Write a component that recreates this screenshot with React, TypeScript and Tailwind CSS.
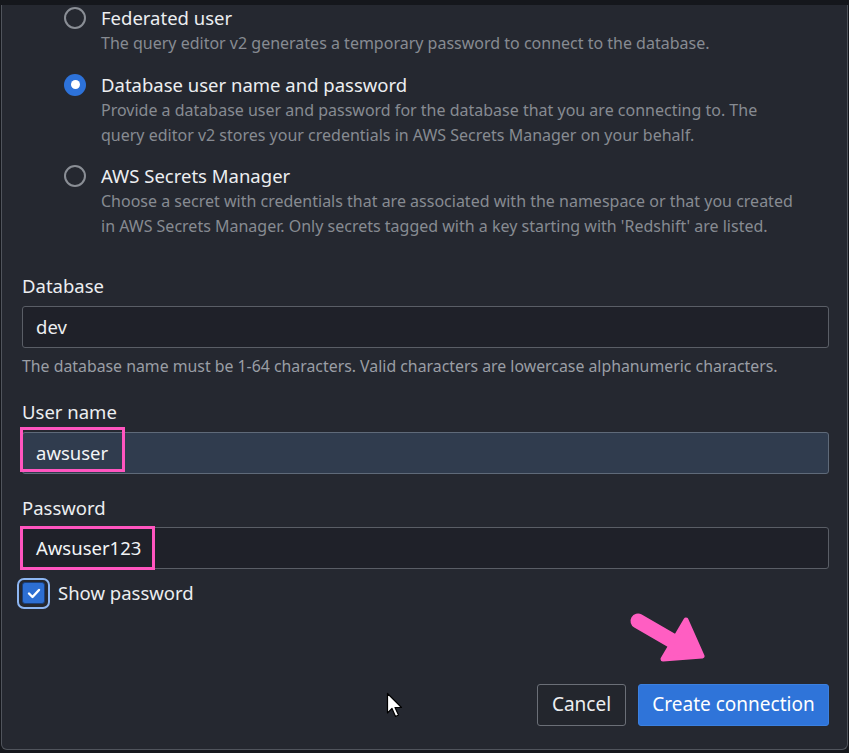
import React from "react";

const font = { fontFamily: '"Noto Sans", "Open Sans", Arial, sans-serif' };

function Radio({ checked }: { checked?: boolean }) {
  if (checked)
    return (
      <div className="w-[22px] h-[22px] rounded-full bg-[#2d72d9] flex items-center justify-center shrink-0">
        <div className="w-[9px] h-[9px] rounded-full bg-white" />
      </div>
    );
  return <div className="w-[22px] h-[22px] rounded-full border-2 border-[#8a8e95] shrink-0" />;
}

function RadioItem({
  checked,
  title,
  lines,
  mt,
}: {
  checked?: boolean;
  title: string;
  lines: string[];
  mt: string;
}) {
  return (
    <div className={`flex ${mt}`}>
      <div className="w-[64px] flex justify-end pt-[2px] shrink-0">
        <Radio checked={checked} />
      </div>
      <div className="ml-[15px]">
        <div className="text-[18.5px] leading-[26px] text-[#eceef0]">{title}</div>
        {lines.map((l, i) => (
          <div key={i} className="text-[16px] leading-[25.5px] text-[#878b92]">
            {l}
          </div>
        ))}
      </div>
    </div>
  );
}

export default function App() {
  return (
    <div className="w-[849px] h-[753px] bg-[#15171c] overflow-hidden relative" style={font}>
      <div className="ml-[1px] w-[847px] h-[745px] bg-[#252830] border-l border-r border-b border-[#50545c] rounded-b-[6px] relative">
        <div className="pl-[20px] pr-[18px]">
          <RadioItem
            mt="mt-[5px]"
            title="Federated user"
            lines={["The query editor v2 generates a temporary password to connect to the database."]}
          />
          <RadioItem
            mt="mt-[15px]"
            checked
            title="Database user name and password"
            lines={[
              "Provide a database user and password for the database that you are connecting to. The",
              "query editor v2 stores your credentials in AWS Secrets Manager on your behalf.",
            ]}
          />
          <RadioItem
            mt="mt-[14px]"
            title="AWS Secrets Manager"
            lines={[
              "Choose a secret with credentials that are associated with the namespace or that you created",
              "in AWS Secrets Manager. Only secrets tagged with a key starting with 'Redshift' are listed.",
            ]}
          />

          <div className="mt-[35px] text-[18.5px] leading-[22px] text-[#eceef0]">Database</div>
          <div className="mt-[9px] h-[42px] bg-[#1f2129] border border-[#5a5e66] rounded-[3px] flex items-center pl-[13px] text-[18.5px] text-[#eceef0]">
            dev
          </div>
          <div className="mt-[7px] text-[15.85px] leading-[22px] text-[#9a9ea5]">
            The database name must be 1-64 characters. Valid characters are lowercase alphanumeric characters.
          </div>

          <div className="mt-[24px] text-[18.5px] leading-[22px] text-[#eceef0]">User name</div>
          <div className="mt-[9px] h-[42px] bg-[#303c4e] border border-[#5f6a79] rounded-[3px] flex items-center pl-[13px] text-[18.5px] text-[#f2f4f6] relative">
            awsuser
            <div className="absolute left-[-3px] top-[-6px] w-[105px] h-[45px] border-[3px] border-[#ff55bf]" />
          </div>

          <div className="mt-[23px] text-[18.5px] leading-[22px] text-[#eceef0]">Password</div>
          <div className="mt-[8px] h-[42px] bg-[#1f2129] border border-[#5a5e66] rounded-[3px] flex items-center pl-[13px] text-[18.5px] text-[#f2f4f6] relative">
            Awsuser123
            <div className="absolute left-[-3px] top-[-2px] w-[135px] h-[44px] border-[3px] border-[#ff55bf]" />
          </div>

          <div className="mt-[9px] flex items-center ml-[-5px]">
            <div className="w-[33px] h-[31px] rounded-[7px] border-2 border-[#8db6f2] flex items-center justify-center">
              <div className="w-[23px] h-[22px] rounded-[3px] bg-[#2d6fd3] border border-[#1b3f7a] flex items-center justify-center">
                <svg width="14" height="11" viewBox="0 0 14 11">
                  <path d="M2 5.5 L5.5 9 L12 2" stroke="white" strokeWidth="2.4" fill="none" strokeLinecap="round" strokeLinejoin="round" />
                </svg>
              </div>
            </div>
            <span className="ml-[8px] text-[18.5px] text-[#eceef0]">Show password</span>
          </div>

          <div className="mt-[75px] flex justify-end gap-[12px]">
            <button className="h-[42px] w-[89px] border border-[#6b6f77] rounded-[3px] text-[19px] text-[#eceef0] bg-[#23262d]">
              Cancel
            </button>
            <button className="h-[42px] w-[191px] rounded-[3px] text-[19px] text-white bg-[#2f74d9] border border-[#3b80e0]">
              Create connection
            </button>
          </div>
        </div>
      </div>

      {/* pink annotation arrow */}
      <svg className="absolute left-0 top-0 pointer-events-none" width="849" height="753">
        <line x1="638" y1="621" x2="676" y2="643" stroke="#ff5ec2" strokeWidth="15" strokeLinecap="round" />
        <polygon points="686,620 702,656 663,659" fill="#ff5ec2" stroke="#ff5ec2" strokeWidth="5" strokeLinejoin="round" />
      </svg>

      {/* mouse cursor */}
      <svg className="absolute left-[386px] top-[692px]" width="20" height="28" viewBox="0 0 20 28">
        <path d="M1.5 1.5 L1.5 21 L6 16.5 L9.5 24.5 L12.5 23 L9 15.5 L15.5 15.5 Z" fill="white" stroke="black" strokeWidth="1.2" strokeLinejoin="round" />
      </svg>
    </div>
  );
}
